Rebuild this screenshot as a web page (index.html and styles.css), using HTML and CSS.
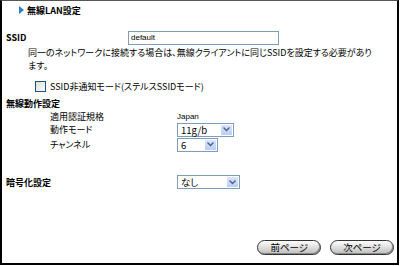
FILE: index.html
```html
<!DOCTYPE html>
<html lang="ja">
<head>
    <meta charset="UTF-8">
    <title>無線LAN設定</title>
    <link rel="stylesheet" href="styles.css">
</head>
<body>
    <div class="frame">
        <div class="title">
            <svg class="mark" width="5" height="8" viewBox="0 0 5 8"><path d="M0 0 L5 4 L0 8 Z" fill="#2f7fd0"/></svg>
            <span>無線LAN設定</span>
        </div>

        <div class="ssid-row">
            <span class="head">SSID</span>
            <input class="text" type="text" value="default">
        </div>
        <p class="note">同一のネットワークに接続する場合は、無線クライアントに同じSSIDを設定する必要があります。</p>

        <div class="check"><span class="box"></span>SSID非通知モード(ステルスSSIDモード)</div>

        <div class="head section">無線動作設定</div>
        <div class="opts">
            <span class="name">適用認証規格</span>
            <span class="value plain">Japan</span>
            <span class="name">動作モード</span>
            <div class="select w57"><span>11g/b</span><span class="drop"><svg width="7" height="5" viewBox="0 0 7 5"><path d="M0.5 0.5 L3.5 3.5 L6.5 0.5" fill="none" stroke="#4d6185" stroke-width="1.4"/></svg></span></div>
            <span class="name">チャンネル</span>
            <div class="select w41"><span>6</span><span class="drop"><svg width="7" height="5" viewBox="0 0 7 5"><path d="M0.5 0.5 L3.5 3.5 L6.5 0.5" fill="none" stroke="#4d6185" stroke-width="1.4"/></svg></span></div>
        </div>

        <div class="enc-row">
            <span class="head">暗号化設定</span>
            <div class="select w63"><span>なし</span><span class="drop"><svg width="7" height="5" viewBox="0 0 7 5"><path d="M0.5 0.5 L3.5 3.5 L6.5 0.5" fill="none" stroke="#4d6185" stroke-width="1.4"/></svg></span></div>
        </div>

        <div class="buttons">
            <button class="pill">前ページ</button>
            <button class="pill">次ページ</button>
        </div>
    </div>
</body>
</html>
```

FILE: styles.css
```css
body { margin: 0; font-family: "Noto Sans CJK JP", "Liberation Sans", sans-serif; font-size: 9px; color: #000; background: #fff; }
.frame { width: 395px; height: 262px; border: 2px solid #000; border-top: 1px solid #555; position: relative; font-feature-settings: "palt"; }
.title { display: flex; align-items: center; gap: 3px; padding: 2px 0 0 17px; height: 14px; font-weight: bold; }
.mark { display: block; }
.head { font-weight: bold; }
.ssid-row { display: flex; align-items: center; margin-top: 13px; padding-left: 4px; height: 15px; }
.ssid-row .head { width: 122px; }
.text { width: 151px; height: 14px; box-sizing: border-box; border: 1px solid #7f9db9; padding: 0 2px; font-family: "Liberation Sans", sans-serif; font-size: 8px; margin: 0; }
.note { margin: 1px 0 0 26px; width: 350px; line-height: 13px; }
.check { display: flex; align-items: center; gap: 4px; margin: 8px 0 0 33px; height: 12px; }
.box { width: 9px; height: 9px; border: 1px solid #1c5180; background: linear-gradient(135deg, #dcdcd7, #fff); }
.section { margin: 6px 0 0 4px; height: 12px; line-height: 12px; }
.opts { display: grid; grid-template-columns: 127px auto; grid-template-rows: 12px 15px 15px; align-items: center; justify-items: start; margin-left: 48px; }
.plain { font-family: "Liberation Sans", sans-serif; font-size: 8px; line-height: 11px; }
.select { display: flex; align-items: center; justify-content: space-between; height: 14px; box-sizing: border-box; border: 1px solid #7f9db9; padding-left: 3px; background: #fff; font-size: 9.5px; }
.w57 { width: 57px; }
.w41 { width: 41px; }
.w63 { width: 63px; }
.drop { width: 13px; height: 12px; display: flex; align-items: center; justify-content: center; background: linear-gradient(#dbe6fc, #b9cdf5); border: 1px solid #fff; box-sizing: border-box; }
.drop svg { display: block; }
.enc-row { display: flex; align-items: center; margin-top: 23px; padding-left: 4px; height: 14px; }
.enc-row .head { width: 171px; }
.buttons { position: absolute; right: 3px; bottom: 8px; display: flex; gap: 9px; }
.pill { font-family: inherit; font-size: 9.5px; height: 15px; padding: 0 12px; border: 1px solid #333; border-radius: 8px; background: linear-gradient(#fff, #d8d8d8 60%, #bbb); box-shadow: inset -1px -1px 0 #888; line-height: 13px; color: #000; }
```
